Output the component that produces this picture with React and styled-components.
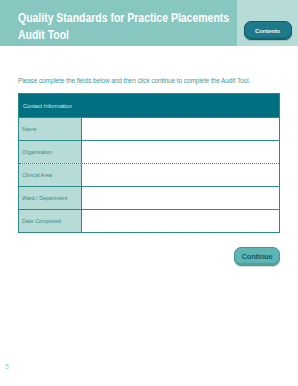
import React from 'react';
import styled, { createGlobalStyle } from 'styled-components';

const Global = createGlobalStyle`
  html, body {
    margin: 0;
    padding: 0;
    background: #ffffff;
  }
  body {
    font-family: "Liberation Sans", Arial, sans-serif;
  }
`;

const Page = styled.div`
  width: 298px;
  height: 386px;
  position: relative;
  background: #fff;
  overflow: hidden;
`;

const Header = styled.div`
  display: flex;
  height: 46px;
`;

const TitleBand = styled.div`
  width: 237px;
  background: #88c6c0;
  padding: 10px 0 0 18px;
  box-sizing: border-box;
`;

const Title = styled.h1`
  margin: 0;
  color: #fff;
  font-size: 13.5px;
  line-height: 16.5px;
  font-weight: 700;
  white-space: nowrap;
  transform: scaleX(0.775);
  transform-origin: left top;
`;

const SideBand = styled.div`
  flex: 1;
  background: #b7dcd8;
  display: flex;
  justify-content: center;
  padding-top: 21px;
  box-sizing: border-box;
`;

const PillButton = styled.div`
  width: ${p => p.$w}px;
  height: ${p => p.$h}px;
  border-radius: 7px;
  background: ${p => p.$bg};
  border: 1px solid ${p => p.$border};
  box-shadow: inset 0 -2px 0 rgba(0,0,0,0.12), 0 1px 1px rgba(0,0,0,0.15);
  color: ${p => p.$color};
  font-size: ${p => p.$fs}px;
  font-weight: 700;
  display: flex;
  align-items: center;
  justify-content: center;
  box-sizing: border-box;
  letter-spacing: -0.2px;
`;

const Body = styled.div`
  padding: 31px 18px 0 18px;
`;

const Intro = styled.p`
  margin: 0 0 8px 0;
  color: #3d9a96;
  font-size: 6.4px;
  line-height: 8px;
  letter-spacing: -0.05px;
`;

const Table = styled.div`
  width: 262px;
  border: 1px solid #2d8a8c;
  box-sizing: border-box;
`;

const TableHead = styled.div`
  height: 23px;
  background: #006f80;
  color: #d8eeee;
  font-size: 5.6px;
  display: flex;
  align-items: center;
  padding-left: 4px;
`;

const Row = styled.div`
  display: grid;
  grid-template-columns: 63px 1fr;
  height: 23px;
  border-top: 1px ${p => (p.$dotted ? 'dotted' : 'solid')} #2d8a8c;
  box-sizing: border-box;
`;

const Label = styled.div`
  background: #b7dcd8;
  border-right: 1px solid #2d8a8c;
  color: #3d8a88;
  font-size: 5.4px;
  display: flex;
  align-items: center;
  padding-left: 3px;
`;

const Field = styled.div`
  background: #fff;
`;

const Actions = styled.div`
  display: flex;
  justify-content: flex-end;
  padding-top: 14px;
`;

const PageNum = styled.div`
  position: absolute;
  left: 5px;
  top: 363px;
  font-size: 7px;
  color: #9fcfca;
`;

const rows = ['Name', 'Organisation', 'Clinical Area', 'Ward / Department', 'Date Completed'];

export default function App() {
  return (
    <Page>
      <Global />
      <Header>
        <TitleBand>
          <Title>
            Quality Standards for Practice Placements
            <br />
            Audit Tool
          </Title>
        </TitleBand>
        <SideBand>
          <PillButton $w={48} $h={19} $bg="#1e7a8a" $border="#0e5d6a" $color="#e8f6f6" $fs={6.2}>
            Contents
          </PillButton>
        </SideBand>
      </Header>
      <Body>
        <Intro>Please complete the fields below and then click continue to complete the Audit Tool.</Intro>
        <Table>
          <TableHead>Contact Information</TableHead>
          {rows.map((r, i) => (
            <Row key={r} $dotted={i === 2}>
              <Label>{r}</Label>
              <Field />
            </Row>
          ))}
        </Table>
        <Actions>
          <PillButton $w={46} $h={19} $bg="#5fb5b3" $border="#3e9896" $color="#0d5e6a" $fs={7.5}>
            Continue
          </PillButton>
        </Actions>
      </Body>
      <PageNum>5</PageNum>
    </Page>
  );
}
